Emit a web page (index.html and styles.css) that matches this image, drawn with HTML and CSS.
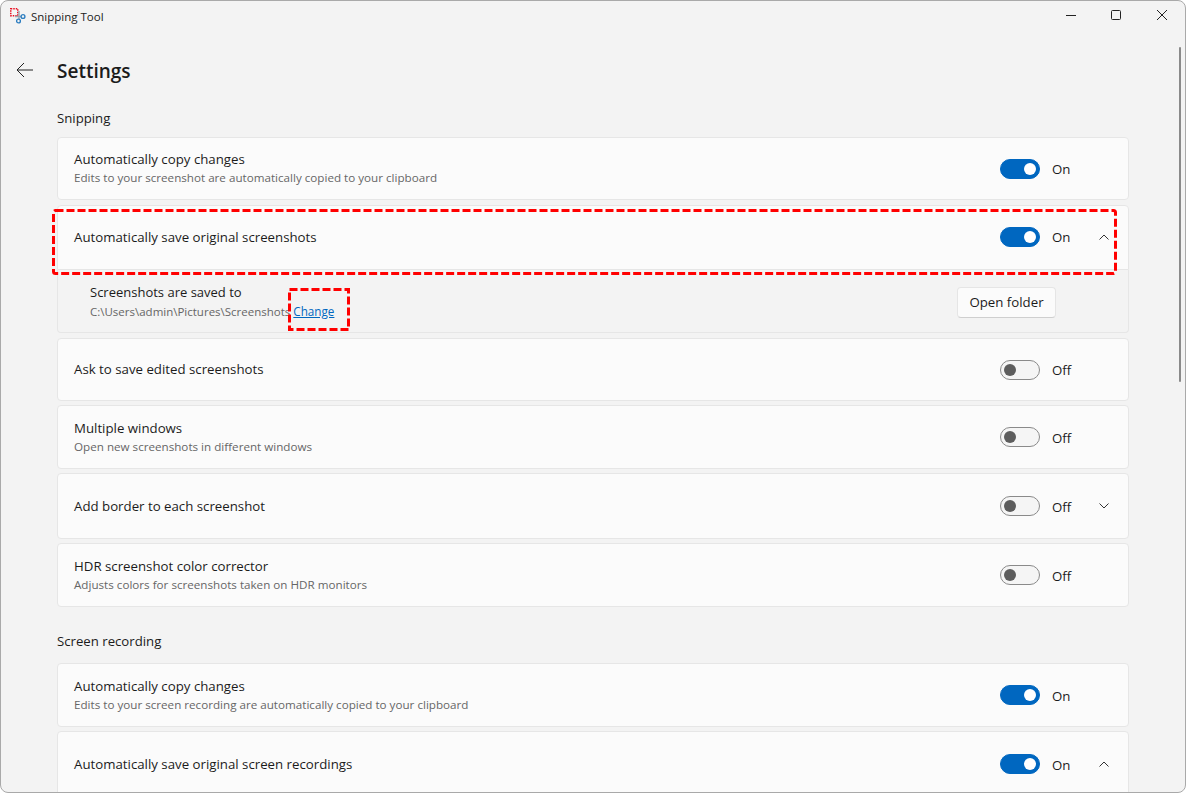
FILE: index.html
```html
<!DOCTYPE html>
<html lang="en">
<head>
<meta charset="utf-8">
<title>Snipping Tool</title>
<link rel="stylesheet" href="styles.css">
</head>
<body>
<div class="window">
  <header class="titlebar">
    <svg class="app-icon" width="16" height="16" viewBox="0 0 16 16">
      <rect x="0.75" y="0.75" width="7" height="7" fill="#f6f6f6" stroke="#e81123" stroke-width="1.5" stroke-dasharray="1.5 1"/>
      <path d="M5 8.5H11" stroke="#9aa4ad" stroke-width="1.4"/>
      <path d="M9 3V11" stroke="#9aa4ad" stroke-width="1.4"/>
      <circle cx="8.5" cy="13" r="1.9" fill="none" stroke="#2f7fc1" stroke-width="1.4"/>
      <circle cx="13" cy="8.5" r="1.9" fill="none" stroke="#2f7fc1" stroke-width="1.4"/>
    </svg>
    <span class="app-name">Snipping Tool</span>
    <div class="caption">
      <svg width="10" height="10" viewBox="0 0 10 10"><path d="M0 5.5H10" stroke="#222" fill="none"/></svg>
      <svg width="10" height="10" viewBox="0 0 10 10"><rect x="0.5" y="0.5" width="9" height="9" rx="1" stroke="#222" fill="none"/></svg>
      <svg width="10" height="10" viewBox="0 0 10 10"><path d="M0 0L10 10M10 0L0 10" stroke="#222" fill="none"/></svg>
    </div>
  </header>
  <div class="heading">
    <svg class="back" width="18" height="16" viewBox="0 0 18 16"><path d="M17 8H1M8 1L1 8L8 15" stroke="#222" fill="none"/></svg>
    <h1>Settings</h1>
  </div>
  <main class="content">
    <h2 class="section first">Snipping</h2>
    <section class="card h63 after5">
      <div class="text"><div class="label">Automatically copy changes</div><div class="desc">Edits to your screenshot are automatically copied to your clipboard</div></div>
      <div class="toggle on"></div><span class="state">On</span><span class="chev"></span>
    </section>
    <section class="card open">
      <div class="text"><div class="label">Automatically save original screenshots</div></div>
      <div class="toggle on"></div><span class="state">On</span>
      <span class="chev"><svg width="10" height="6" viewBox="0 0 10 6"><path d="M0.5 5.5L5 1L9.5 5.5" stroke="#333" fill="none"/></svg></span>
      <svg class="mark mark-row" width="1065" height="66"><rect x="1.5" y="1.5" width="1062" height="63" rx="2"/></svg>
    </section>
    <section class="expander">
      <div class="text"><div class="sublabel">Screenshots are saved to</div><div class="desc path">C:\Users\admin\Pictures\Screenshots <a class="link">Change</a></div></div>
      <button class="btn">Open folder</button>
      <svg class="mark mark-link" width="62" height="43"><rect x="1.5" y="1.5" width="59" height="40"/></svg>
    </section>
    <section class="card h63 gap5">
      <div class="text"><div class="label">Ask to save edited screenshots</div></div>
      <div class="toggle"></div><span class="state">Off</span><span class="chev"></span>
    </section>
    <section class="card h64 gap">
      <div class="text"><div class="label">Multiple windows</div><div class="desc">Open new screenshots in different windows</div></div>
      <div class="toggle"></div><span class="state">Off</span><span class="chev"></span>
    </section>
    <section class="card h66 gap">
      <div class="text"><div class="label">Add border to each screenshot</div></div>
      <div class="toggle"></div><span class="state">Off</span>
      <span class="chev"><svg width="10" height="6" viewBox="0 0 10 6"><path d="M0.5 0.5L5 5L9.5 0.5" stroke="#333" fill="none"/></svg></span>
    </section>
    <section class="card h64 gap">
      <div class="text"><div class="label">HDR screenshot color corrector</div><div class="desc">Adjusts colors for screenshots taken on HDR monitors</div></div>
      <div class="toggle"></div><span class="state">Off</span><span class="chev"></span>
    </section>
    <h2 class="section">Screen recording</h2>
    <section class="card h64">
      <div class="text"><div class="label">Automatically copy changes</div><div class="desc">Edits to your screen recording are automatically copied to your clipboard</div></div>
      <div class="toggle on"></div><span class="state">On</span><span class="chev"></span>
    </section>
    <section class="card h66 gap">
      <div class="text"><div class="label">Automatically save original screen recordings</div></div>
      <div class="toggle on"></div><span class="state">On</span>
      <span class="chev"><svg width="10" height="6" viewBox="0 0 10 6"><path d="M0.5 5.5L5 1L9.5 5.5" stroke="#333" fill="none"/></svg></span>
    </section>
  </main>
  <div class="scrollbar"></div>
</div>
</body>
</html>
```
FILE: styles.css
```css
* { box-sizing: border-box; }
html, body { margin: 0; height: 100%; overflow: hidden; background: #fff; }
body { font-family: "Open Sans", "Noto Sans", "Liberation Sans", sans-serif; color: #1b1b1b; }
.window { position: relative; width: 1186px; height: 793px; background: #f3f3f3; border: 1px solid #a9a9a9; border-radius: 8px; overflow: hidden; }
.titlebar { display: flex; align-items: center; height: 30px; padding-left: 9px; }
.app-icon { flex: none; margin-bottom: 1px; }
.app-name { margin-left: 5px; font-size: 11.5px; color: #222; }
.caption { margin-left: auto; display: flex; align-items: center; gap: 35px; padding-right: 18px; margin-bottom: 2px; }
.caption svg:last-child { margin-left: 1px; }
.heading { display: flex; align-items: center; height: 48px; padding-left: 15px; margin-top: 15px; }
h1 { margin: 2px 0 0 23px; font-size: 19px; font-weight: 600; color: #1b1b1b; }
.content { padding: 0 56px; }
.section { margin: 0; font-size: 13.2px; font-weight: 400; line-height: 19px; height: 56px; padding-top: 25px; }
.section.first { height: 43px; padding-top: 15px; }
.card, .expander { position: relative; display: flex; align-items: center; background: #fbfbfb; border: 1px solid #e6e6e6; border-radius: 4px; padding-left: 16px; }
.h63 { height: 63px; }
.h63 .text { padding-bottom: 2px; }
.h64 { height: 64px; }
.h66 { height: 66px; }
.h64 .state, .h66 .state { padding-top: 2px; }
.after5 { margin-bottom: 5px; }
.gap { margin-top: 4px; }
.gap5 { margin-top: 5px; }
.open { height: 65px; padding-bottom: 2px; border-radius: 4px 4px 0 0; }
.expander { height: 63px; padding-top: 2px; background: #f3f3f3; border-top: 0; border-radius: 0 0 4px 4px; padding-left: 32px; }
.expander .text { padding-bottom: 2px; }
.text { flex: 1; min-width: 0; }
.label { font-size: 13.25px; line-height: 18px; color: #1b1b1b; }
.sublabel { font-size: 13px; line-height: 18px; }
.desc { font-size: 11.65px; line-height: 16px; margin-top: 2px; color: #666; }
.path { font-size: 11.5px; }
.link { color: #0067c0; text-decoration: underline; font-size: 11.7px; }
.toggle { position: relative; flex: none; width: 40px; height: 20px; border-radius: 10px; background: #f5f5f5; border: 1px solid #8a8a8a; }
.toggle::after { content: ""; position: absolute; left: 3px; top: 3px; width: 12px; height: 12px; border-radius: 50%; background: #5d5d5d; }
.toggle.on { background: #0067c0; border-color: #0067c0; }
.toggle.on::after { left: auto; right: 3px; background: #fff; }
.state { flex: none; width: 42px; margin-left: 12px; font-size: 13.25px; }
.chev { flex: none; width: 20px; margin-right: 14px; display: flex; justify-content: center; }
.btn { flex: none; width: 99px; height: 31px; margin-right: 72px; background: #fbfbfb; border: 1px solid #e5e5e5; border-bottom-color: #cfcfcf; border-radius: 4px; font: inherit; font-size: 13.25px; color: #1b1b1b; padding: 0; }
.mark { position: absolute; z-index: 2; overflow: visible; }
.mark rect { fill: none; stroke: #f00; stroke-width: 3; stroke-dasharray: 8 3; }
.mark-row { left: -6px; top: 3px; }
.mark-link { left: 230px; top: 18px; }
.scrollbar { position: absolute; right: 4px; top: 46px; width: 2px; height: 335px; background: #8a8a8a; border-radius: 1px; }
```
